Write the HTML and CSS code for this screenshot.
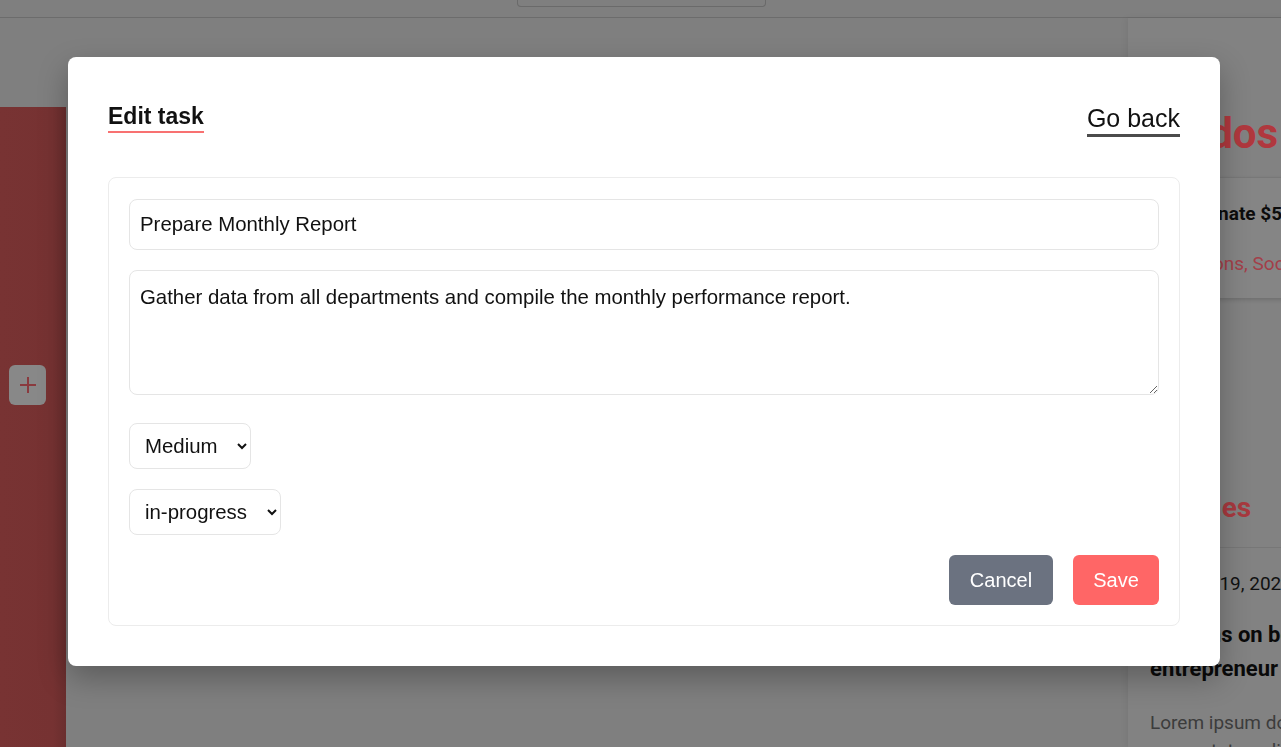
FILE: index.html
```html
<!DOCTYPE html>
<html lang="en">
<head>
<meta charset="utf-8">
<title>Edit task</title>
<link rel="stylesheet" href="styles.css">
</head>
<body>
<div class="page">
  <header class="topbar">
    <div class="search"></div>
  </header>
  <div class="main">
    <aside class="sidebar">
      <button class="add-btn" type="button">
        <svg width="18" height="18" viewBox="0 0 18 18"><path d="M9 1v16M1 9h16" stroke="#8a3a3e" stroke-width="2" fill="none"/></svg>
      </button>
    </aside>
    <section class="content"></section>
    <aside class="rightpanel">
      <h2 class="rp-title">Todos</h2>
      <div class="rp-card">
        <p class="rp-card-title">Donate $50 to charity</p>
        <p class="rp-card-tags">Donations, Social</p>
      </div>
      <h2 class="rp-sub">Articles</h2>
      <div class="rp-article">
        <p class="rp-date">January 19, 2024</p>
        <p class="rp-art-title">Lessons on being an<br>entrepreneur</p>
        <p class="rp-text">Lorem ipsum dolor sit amet,<br>consectetur adipiscing elit</p>
      </div>
    </aside>
  </div>
</div>

<div class="modal">
  <div class="modal-head">
    <h1 class="modal-title">Edit task</h1>
    <a class="go-back" href="#">Go back</a>
  </div>
  <form class="task-form">
    <input class="field" type="text" value="Prepare Monthly Report">
    <textarea class="field area">Gather data from all departments and compile the monthly performance report.</textarea>
    <select class="sel sel-priority">
      <option>Low</option>
      <option selected>Medium</option>
      <option>High</option>
    </select>
    <select class="sel sel-status">
      <option>todo</option>
      <option selected>in-progress</option>
      <option>done</option>
    </select>
    <div class="actions">
      <button class="btn cancel" type="button">Cancel</button>
      <button class="btn save" type="button">Save</button>
    </div>
  </form>
</div>
</body>
</html>
```

FILE: styles.css
```css
* { box-sizing: border-box; }
html, body {
  margin: 0;
  height: 100%;
  overflow: hidden;
}
body {
  background: #7f7f7f;
  font-family: "Liberation Sans", Arial, sans-serif;
}
.page {
  height: 100%;
  display: flex;
  flex-direction: column;
}
.topbar {
  height: 18px;
  border-bottom: 1px solid #6c6c6c;
  display: flex;
  justify-content: center;
  flex-shrink: 0;
}
.search {
  width: 249px;
  height: 7px;
  margin-left: 1px;
  border: 1px solid #6a6a6a;
  border-top: none;
  border-radius: 0 0 4px 4px;
}
.main {
  flex: 1;
  display: flex;
  min-height: 0;
}
.sidebar {
  width: 66px;
  flex-shrink: 0;
  margin-top: 89px;
  background: linear-gradient(90deg, #783333 0%, #763232 80%, #6a2e2e 100%);
  display: flex;
  flex-direction: column;
  align-items: flex-start;
  padding: 258px 0 0 9px;
}
.add-btn {
  width: 37px;
  height: 40px;
  border: none;
  border-radius: 6px;
  background: #888888;
  display: flex;
  align-items: center;
  justify-content: center;
  padding: 0;
}
.content {
  flex: 1;
}
.rightpanel {
  width: 400px;
  flex-shrink: 0;
  margin-right: -247px;
  background: #828282;
  padding: 0 0 0 22px;
  font-family: Roboto, "Liberation Sans", sans-serif;
  box-shadow: -2px 0 6px rgba(0,0,0,0.06);
}
.rp-title {
  margin: 91px 0 0 0;
  padding-left: 13px;
  font-size: 42px;
  font-weight: 700;
  line-height: 50px;
  color: #b0383e;
}
.rp-card {
  margin: 18px 0 0 -22px;
  padding: 23px 0 22px 22px;
  height: 121px;
  background: #858585;
  border-top: 1px solid #787878;
  box-shadow: 0 2px 4px rgba(0,0,0,0.15);
}
.rp-card-title {
  margin: 0;
  padding-left: 45px;
  font-size: 19px;
  font-weight: 700;
  color: #0c0c0c;
  line-height: 26px;
}
.rp-card-tags {
  margin: 24px 0 0 0;
  padding-left: 8px;
  font-size: 19px;
  color: #a33f49;
  line-height: 26px;
}
.rp-sub {
  margin: 190px 0 0 0;
  padding-left: 3px;
  font-size: 28px;
  font-weight: 700;
  color: #a8393f;
  line-height: 40px;
}
.rp-article {
  margin: 19px 0 0 -22px;
  padding: 22px 0 0 22px;
  border-top: 1px solid #777;
}
.rp-date {
  margin: 0;
  font-size: 19px;
  color: #111;
  line-height: 28px;
  text-indent: -3px;
}
.rp-art-title {
  margin: 20px 0 0 0;
  font-size: 22px;
  font-weight: 700;
  color: #0a0a0a;
  line-height: 34px;
}
.rp-text {
  margin: 23px 0 0 0;
  font-size: 19px;
  color: #3c3c3c;
  line-height: 28px;
}

/* modal */
.modal {
  position: fixed;
  top: 57px;
  left: 68px;
  width: 1152px;
  height: 609px;
  background: #fff;
  border-radius: 8px;
  padding: 40px;
  box-shadow: 0 12px 30px rgba(0,0,0,0.28);
  display: flex;
  flex-direction: column;
  gap: 40px;
}
.modal-head {
  display: flex;
  justify-content: space-between;
  align-items: flex-start;
  height: 40px;
  flex-shrink: 0;
}
.modal-title {
  margin: 6px 0 0 0;
  font-size: 23px;
  font-weight: 700;
  line-height: 26px;
  color: #111;
  padding-bottom: 2px;
  border-bottom: 2px solid #f87171;
}
.go-back {
  margin-top: 7px;
  font-size: 25px;
  line-height: 28px;
  color: #111;
  text-decoration: none;
  padding-bottom: 2px;
  border-bottom: 3px solid #4b4b4b;
}
.task-form {
  border: 1px solid #ececec;
  border-radius: 8px;
  padding: 21px 20px 20px;
  display: flex;
  flex-direction: column;
  align-items: flex-start;
  gap: 20px;
  flex: 1;
}
.field {
  width: 100%;
  border: 1px solid #e5e5e5;
  border-radius: 8px;
  font-family: "Liberation Sans", Arial, sans-serif;
  font-size: 20.4px;
  color: #111;
  padding: 0 10px;
  outline: none;
}
input.field {
  height: 51px;
  flex-shrink: 0;
}
.area {
  height: 125px;
  flex-shrink: 0;
  padding: 14px 10px;
  line-height: 24px;
  resize: vertical;
  margin-bottom: 8px;
}
.sel {
  height: 46px;
  flex-shrink: 0;
  border: 1px solid #e5e5e5;
  border-radius: 8px;
  background: #fff;
  font-family: "Liberation Sans", Arial, sans-serif;
  font-size: 20.4px;
  color: #111;
  padding: 0 6px 0 11px;
}
.sel-priority { width: 122px; }
.sel-status { width: 152px; }
.actions {
  align-self: stretch;
  display: flex;
  justify-content: flex-end;
  gap: 20px;
}
.btn {
  height: 50px;
  border: none;
  border-radius: 6px;
  font-family: "Liberation Sans", Arial, sans-serif;
  font-size: 20px;
  color: #fff;
  padding: 0 20px;
}
.cancel { background: #6b7280; width: 104px; }
.save { background: #ff6666; width: 86px; }
```
